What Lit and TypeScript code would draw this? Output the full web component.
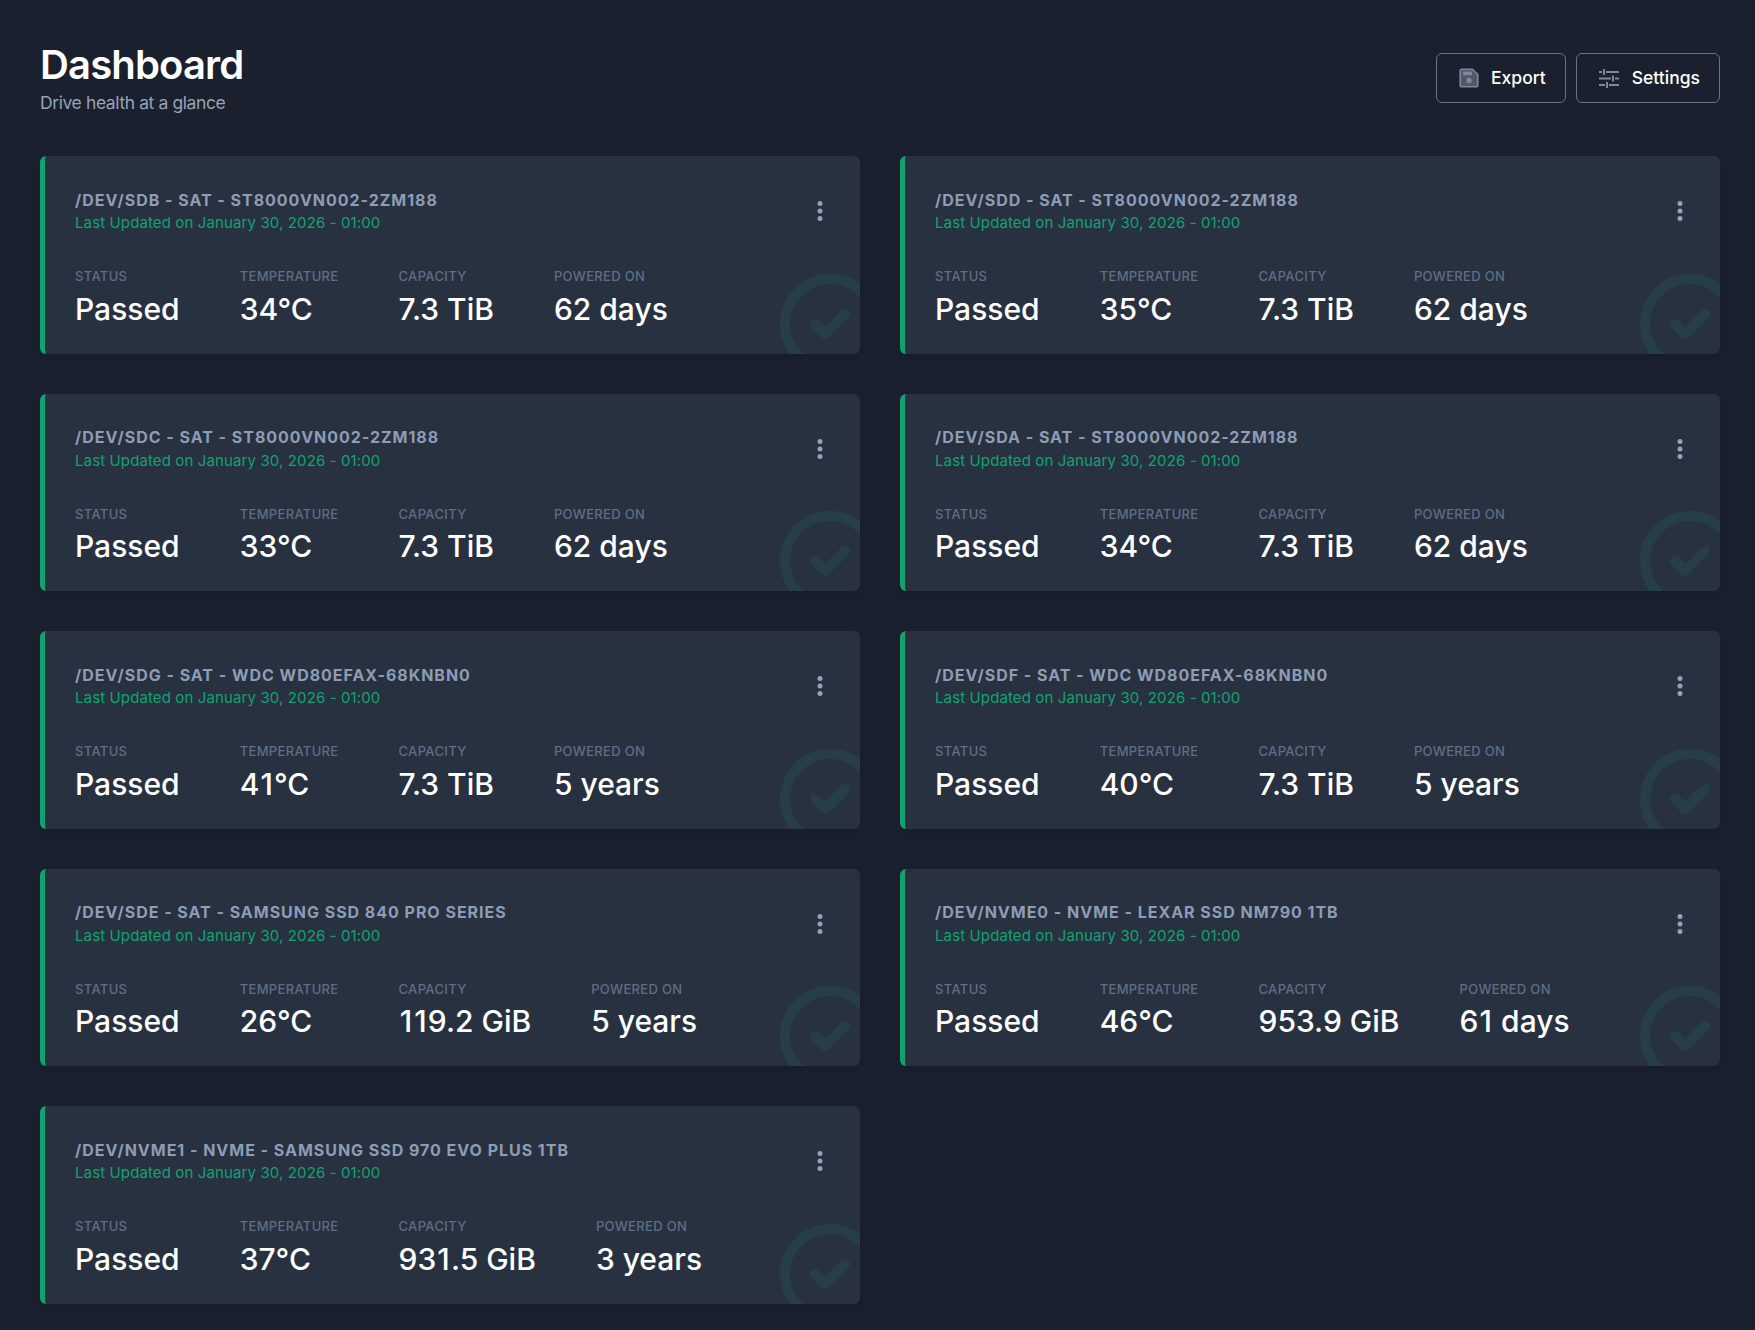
import { LitElement, html, css } from "lit";
import { customElement } from "lit/decorators.js";

type Drive = { name: string; temp: string; cap: string; on: string };

const drives: Drive[] = [
  { name: "/dev/sdb - SAT - ST8000VN002-2ZM188", temp: "34°C", cap: "7.3 TiB", on: "62 days" },
  { name: "/dev/sdd - SAT - ST8000VN002-2ZM188", temp: "35°C", cap: "7.3 TiB", on: "62 days" },
  { name: "/dev/sdc - SAT - ST8000VN002-2ZM188", temp: "33°C", cap: "7.3 TiB", on: "62 days" },
  { name: "/dev/sda - SAT - ST8000VN002-2ZM188", temp: "34°C", cap: "7.3 TiB", on: "62 days" },
  { name: "/dev/sdg - SAT - WDC WD80EFAX-68KNBN0", temp: "41°C", cap: "7.3 TiB", on: "5 years" },
  { name: "/dev/sdf - SAT - WDC WD80EFAX-68KNBN0", temp: "40°C", cap: "7.3 TiB", on: "5 years" },
  { name: "/dev/sde - SAT - Samsung SSD 840 PRO Series", temp: "26°C", cap: "119.2 GiB", on: "5 years" },
  { name: "/dev/nvme0 - NVMe - Lexar SSD NM790 1TB", temp: "46°C", cap: "953.9 GiB", on: "61 days" },
  { name: "/dev/nvme1 - NVMe - Samsung SSD 970 EVO Plus 1TB", temp: "37°C", cap: "931.5 GiB", on: "3 years" },
];

@customElement("app-root")
export class AppRoot extends LitElement {
  static styles = css`
    :host { display: block; height: 1330px; overflow: hidden; background: #1a202e; color: #fff; font-family: Inter, "Liberation Sans", sans-serif; }
    .page { padding: 40px 35px 0 40px; box-sizing: border-box; }
    .head { display: flex; justify-content: space-between; align-items: flex-start; height: 116px; }
    h1 { margin: 1px 0 0; font-size: 40px; line-height: 48px; font-weight: 600; letter-spacing: -0.85px; }
    .sub { font-size: 17.5px; line-height: 24px; color: #94a3b8; letter-spacing: -0.4px; margin-top: 2px; }
    .actions { display: flex; gap: 10px; margin-top: 13px; }
    .btn { display: flex; align-items: center; gap: 13px; height: 50px; box-sizing: border-box; padding: 0 19px 2px 22px; border: 1px solid #64748b; border-radius: 6px; font-size: 17.5px; font-weight: 500; color: #fff; }
    .btn.export { gap: 12px; }
    .btn svg { width: 20px; height: 20px; display: block; margin-top: 2px; }
    .grid { display: grid; grid-template-columns: 820px 820px; column-gap: 40px; row-gap: 40px; grid-auto-rows: 197.5px; }
    .card { position: relative; overflow: hidden; box-sizing: border-box; background: #283140; border-left: 5px solid #10a36f; border-radius: 6px; padding: 32.6px 0 0 30px; box-shadow: 0 4px 8px rgba(0,0,0,0.12); }
    .top { display: flex; justify-content: space-between; align-items: flex-start; padding-right: 28px; }
    .title { font-size: 16px; line-height: 22px; font-weight: 700; letter-spacing: 0.97px; text-transform: uppercase; color: #8d9db5; }
    .updated { font-size: 15px; line-height: 20px; color: #10a36f; letter-spacing: 0.12px; margin-top: 2.45px; }
    .dots { width: 24px; height: 24px; display: block; margin-top: 10.45px; color: #94a3b8; }
    .stats { display: flex; gap: 60px; margin-top: 34px; position: relative; }
    .label { font-size: 13px; line-height: 18px; font-weight: 500; text-transform: uppercase; color: #5f6e85; letter-spacing: 0.33px; }
    .val { font-size: 30px; line-height: 36px; font-weight: 500; color: #fff; margin-top: 5.6px; }
    .one { padding: 0 1.1px; }
    .mark { position: absolute; right: -30px; bottom: -30px; width: 120px; height: 120px; color: #10a36f; opacity: 0.12; }
  `;

  private digits(val: string) {
    return val.split(/(1)/).map((p) => (p === "1" ? html`<span class="one">1</span>` : p));
  }

  private stat(label: string, val: string) {
    return html`<div><div class="label">${label}</div><div class="val">${this.digits(val)}</div></div>`;
  }

  private card(d: Drive) {
    return html`<div class="card">
      <div class="top">
        <div>
          <div class="title">${d.name}</div>
          <div class="updated">Last Updated on January 30, 2026 - 01:00</div>
        </div>
        <svg class="dots" viewBox="0 0 24 24" fill="currentColor"><circle cx="12" cy="4.5" r="2.5"/><circle cx="12" cy="12" r="2.5"/><circle cx="12" cy="19.5" r="2.5"/></svg>
      </div>
      <div class="stats">
        ${this.stat("Status", "Passed")}${this.stat("Temperature", d.temp)}${this.stat("Capacity", d.cap)}${this.stat("Powered On", d.on)}
      </div>
      <svg class="mark" viewBox="0 0 24 24" fill="none" stroke="currentColor" stroke-width="2" stroke-linecap="round" stroke-linejoin="round"><path d="M9 12l2 2 4-4m6 2a9 9 0 11-18 0 9 9 0 0118 0z"/></svg>
    </div>`;
  }

  render() {
    return html`<div class="page">
      <div class="head">
        <div><h1>Dashboard</h1><div class="sub">Drive health at a glance</div></div>
        <div class="actions">
          <div class="btn export">
            <svg viewBox="0 0 20 20" fill="#7d889c"><path fill-opacity="0.55" stroke="#7d889c" stroke-width="1.6" stroke-linejoin="round" d="M3 1.2h10.5l5.3 5.3V17a1.8 1.8 0 0 1-1.8 1.8H3A1.8 1.8 0 0 1 1.2 17V3A1.8 1.8 0 0 1 3 1.2z"/><rect x="4" y="3.6" width="9" height="3.6" rx="0.6"/><circle cx="10" cy="12.5" r="2.7"/></svg>
            Export
          </div>
          <div class="btn">
            <svg viewBox="0 0 20 20" fill="none" stroke="#7d889c" stroke-width="2"><path d="M0 4h3M7 4h13M5 1v6M0 10.5h12M16 10.5h4M14 7.5v6M0 17h6M10 17h10M8 14v6"/></svg>
            Settings
          </div>
        </div>
      </div>
      <div class="grid">${drives.map((d) => this.card(d))}</div>
    </div>`;
  }
}
